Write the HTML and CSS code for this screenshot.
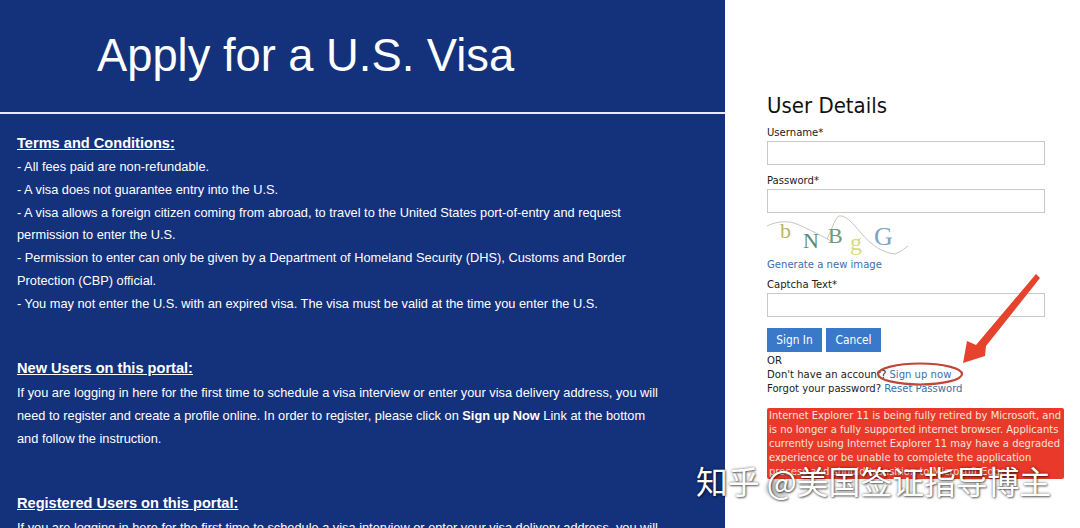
FILE: index.html
```html
<!DOCTYPE html>
<html lang="en">
<head>
    <meta charset="UTF-8">
    <meta name="viewport" content="width=device-width, initial-scale=1.0">
    <title>Apply for a U.S. Visa</title>
    <link rel="stylesheet" href="styles.css">
</head>
<body>
    <div class="page">
        <div class="info">
            <h1>Apply for a U.S. Visa</h1>
            <div class="info-body">
                <h3>Terms and Conditions:</h3>
                <p>- All fees paid are non-refundable.</p>
                <p>- A visa does not guarantee entry into the U.S.</p>
                <p>- A visa allows a foreign citizen coming from abroad, to travel to the United States port-of-entry and request permission to enter the U.S.</p>
                <p>- Permission to enter can only be given by a Department of Homeland Security (DHS), Customs and Border Protection (CBP) official.</p>
                <p>- You may not enter the U.S. with an expired visa. The visa must be valid at the time you enter the U.S.</p>
                <h3 class="gap">New Users on this portal:</h3>
                <p>If you are logging in here for the first time to schedule a visa interview or enter your visa delivery address, you will need to register and create a profile online. In order to register, please click on <b>Sign up Now</b> Link at the bottom and follow the instruction.</p>
                <h3 class="gap">Registered Users on this portal:</h3>
                <p class="cut">If you are logging in here for the first time to schedule a visa interview or enter your visa delivery address, you will</p>
            </div>
        </div>
        <div class="login">
            <h2>User Details</h2>
            <label>Username*</label>
            <div class="field"></div>
            <label>Password*</label>
            <div class="field"></div>
            <svg class="captcha" width="146" height="41" viewBox="0 0 146 41">
                <path d="M0 11 C10 6 22 5 32 10 C50 18 60 24 66 27" fill="none" stroke="#c4c8bc" stroke-width="1"/>
                <path d="M60 24 C66 12 68 3 72 1 C78 0 84 6 94 18 C104 30 116 38 128 39 C134 37 138 33 141 31" fill="none" stroke="#c4c8bc" stroke-width="1"/>
                <text x="13" y="23" class="cap-b">b</text>
                <text x="36" y="33" class="cap-n">N</text>
                <text x="61" y="28" class="cap-bb">B</text>
                <text x="83" y="35" class="cap-g">g</text>
                <text x="107" y="30" class="cap-gg">G</text>
            </svg>
            <a class="gen" href="#">Generate a new image</a>
            <label class="cap-label">Captcha Text*</label>
            <div class="field"></div>
            <div class="buttons">
                <button>Sign In</button>
                <button>Cancel</button>
            </div>
            <div class="links">
                <div>OR</div>
                <div>Don't have an account? <a href="#">Sign up now</a></div>
                <div>Forgot your password? <a href="#">Reset Password</a></div>
            </div>
            <div class="alert">Internet Explorer 11 is being fully retired by Microsoft, and is no longer a fully supported internet browser. Applicants currently using Internet Explorer 11 may have a degraded experience or be unable to complete the application process and should transition to Microsoft Edge.</div>
        </div>
        <svg class="marks" width="1080" height="528" viewBox="0 0 1080 528">
            <ellipse cx="920" cy="374" rx="42" ry="10.5" fill="none" stroke="#c0453a" stroke-width="2.2"/>
            <path d="M1036 274 L1040 278 L986 346 L985 356 L963 363 L967 341 L976 345 Z" fill="#e5432d"/>
        </svg>
        <div class="watermark-blob"></div>
        <div class="watermark">知乎 @美国签证指导博主</div>
    </div>
</body>
</html>
```
FILE: styles.css
```css
html, body {
    margin: 0;
    height: 100%;
    overflow: hidden;
}
.page {
    display: flex;
    position: relative;
    width: 1080px;
    height: 528px;
    overflow: hidden;
    background: #fff;
}
.info {
    width: 725px;
    flex: none;
    background: #14317c;
    color: #fff;
    font-family: "Liberation Sans", Arial, sans-serif;
}
h1 {
    margin: 0;
    height: 114px;
    box-sizing: border-box;
    padding: 29px 0 0 97px;
    font-size: 45.3px;
    line-height: 54px;
    font-weight: 400;
    border-bottom: 2px solid #e8ebf2;
}
.info-body {
    padding: 18px 65px 0 17px;
    font-size: 12.8px;
    line-height: 22.8px;
}
h3 {
    margin: 0 0 1px;
    font-size: 14.6px;
    line-height: 23px;
    text-decoration: underline;
}
h3.gap {
    margin: 41.5px 0 2px;
}
p {
    margin: 0;
}
p.cut {
    white-space: nowrap;
}
.login {
    flex: 1;
    padding: 92px 16px 0 42px;
    font-family: Tahoma, "DejaVu Sans Condensed", "Noto Sans", sans-serif;
    font-size: 11.2px;
    color: #222;
}
h2 {
    margin: 0 0 6px;
    font-size: 22px;
    line-height: 28px;
    font-weight: 400;
    color: #111;
}
label {
    display: block;
    line-height: 14px;
}
.field {
    width: 278px;
    height: 24px;
    box-sizing: border-box;
    margin: 1px 0 9px;
    border: 1px solid #c9c9c9;
    background: #fff;
}
.captcha {
    display: block;
    margin-top: -7px;
}
.captcha text {
    font-family: "Liberation Serif", serif;
    font-size: 22px;
}
.captcha .cap-g { fill: #d9d97c; font-size: 24px; }
.captcha .cap-gg { fill: #7fa3c4; font-size: 26px; }
.cap-b { fill: #b9b56a; }
.cap-n { fill: #5f8a74; }
.cap-bb { fill: #6f9a78; }
a {
    color: #3b6fae;
    text-decoration: none;
}
.gen {
    display: block;
    line-height: 16px;
    margin-top: 1px;
}
label.cap-label {
    margin-top: 5px;
}
.buttons {
    display: flex;
    gap: 4px;
    margin-top: 11px;
}
button {
    padding: 0;
    width: 55px;
    height: 24px;
    border: none;
    background: #3a78c9;
    color: #fff;
    font: inherit;
    font-size: 11.8px;
}
.links {
    margin-top: 2px;
    line-height: 14px;
}
.alert {
    width: 297px;
    box-sizing: border-box;
    height: 71px;
    margin-top: 12px;
    padding: 1px 0 1px 2px;
    border-radius: 2px;
    background: #e8392a;
    color: #f6e4dc;
    font-size: 11.1px;
    line-height: 14px;
}
.marks {
    position: absolute;
    left: 0;
    top: 0;
}
.watermark-blob {
    position: absolute;
    left: 766px;
    top: 480px;
    width: 24px;
    height: 17px;
    border-radius: 50%;
    background: rgba(110, 110, 110, 0.4);
    filter: blur(2px);
}
.watermark {
    position: absolute;
    left: 696px;
    top: 459px;
    font-family: "Noto Sans CJK SC", sans-serif;
    font-size: 31.8px;
    line-height: 42px;
    color: #fff;
    text-shadow: 0 0 3px rgba(0, 0, 0, 0.55), 1px 1px 2px rgba(0, 0, 0, 0.5);
    white-space: nowrap;
}
```
